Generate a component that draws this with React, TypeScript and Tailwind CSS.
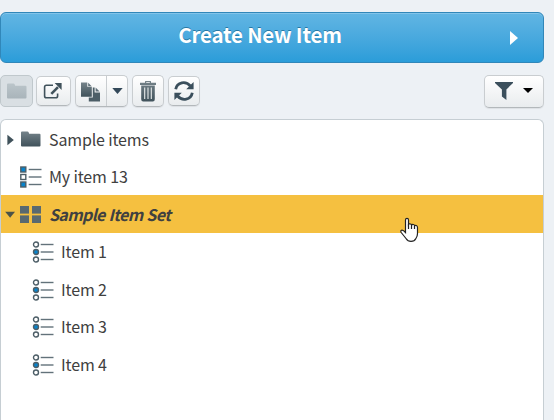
import { useState } from 'react';
import type { ReactNode } from 'react';
import clsx from 'clsx';

type IconKind = 'folder' | 'checklist' | 'set' | 'radio';

type TreeItem = {
  id: string;
  label: string;
  icon: IconKind;
  level: number;
  arrow?: 'right' | 'down';
};

const items: TreeItem[] = [
  { id: 'folder', label: 'Sample items', icon: 'folder', level: 0, arrow: 'right' },
  { id: 'item-13', label: 'My item 13', icon: 'checklist', level: 0 },
  { id: 'set', label: 'Sample Item Set', icon: 'set', level: 0, arrow: 'down' },
  { id: 'item-1', label: 'Item 1', icon: 'radio', level: 1 },
  { id: 'item-2', label: 'Item 2', icon: 'radio', level: 1 },
  { id: 'item-3', label: 'Item 3', icon: 'radio', level: 1 },
  { id: 'item-4', label: 'Item 4', icon: 'radio', level: 1 },
];

function Gradients() {
  return (
    <svg width="0" height="0" className="absolute">
      <defs>
        <linearGradient id="slate" x1="0" y1="0" x2="0" y2="1">
          <stop offset="0" stopColor="#75838a" />
          <stop offset="1" stopColor="#40525b" />
        </linearGradient>
        <linearGradient id="muted" x1="0" y1="0" x2="0" y2="1">
          <stop offset="0" stopColor="#bbc5ca" />
          <stop offset="1" stopColor="#a9b4ba" />
        </linearGradient>
      </defs>
    </svg>
  );
}

function Folder({ fill }: { fill: string }) {
  return (
    <svg width="20" height="16" viewBox="0 0 20 16">
      <path d="M0 1.5Q0 .5 1 .5H6.5Q7.3 .5 7.6 1.3L8.2 2.8H18.5Q19.5 2.8 19.5 3.8V14.5Q19.5 15.5 18.5 15.5H1Q0 15.5 0 14.5Z" fill={fill} />
    </svg>
  );
}

function ItemIcon({ kind }: { kind: IconKind }) {
  if (kind === 'folder') {
    return <Folder fill="url(#slate)" />;
  }

  if (kind === 'set') {
    return (
      <svg width="22" height="18" viewBox="0 0 22 18" fill="#596970">
        <rect x="0" y="0" width="9" height="7.6" />
        <rect x="12" y="0" width="9" height="7.6" />
        <rect x="0" y="9.4" width="9" height="7.6" />
        <rect x="12" y="9.4" width="9" height="7.6" />
      </svg>
    );
  }

  return (
    <svg width="22" height="22" viewBox="0 0 22 22" strokeWidth="1.4" stroke="#4d5e67">
      {[3.5, 11, 18.5].map((y, i) => (
        <g key={y}>
          {kind === 'checklist' ? (
            <rect x="0.8" y={y - 2.5} width="5" height="5" fill={i === 1 ? '#fff' : '#0883cb'} />
          ) : (
            <circle cx="4" cy={y} r="2.5" fill={i === 1 ? '#0883cb' : '#fff'} />
          )}
          <path d={`M8.7 ${y}H21.5`} stroke="#62727a" />
        </g>
      ))}
    </svg>
  );
}

function ToolButton({ children, className }: { children: ReactNode; className?: string }) {
  return (
    <button
      className={clsx(
        'flex items-center justify-center rounded-[5px] border border-[#c9cdd0] border-b-[#b3b8bb] bg-linear-to-b from-white to-[#e9ecee] shadow-[0_1px_1px_#00000012]',
        className
      )}
    >
      {children}
    </button>
  );
}

function Toolbar() {
  return (
    <div className="flex h-11 items-start pt-3">
      <button className="flex h-8 w-[33px] items-center justify-center rounded-[5px] border border-[#c0c8cc] bg-[#d9dfe3]">
        <Folder fill="url(#muted)" />
      </button>

      <ToolButton className="mt-px ml-[3px] h-[30px] w-[35px] pr-px">
        <svg width="20" height="18" viewBox="0 0 20 18" fill="none" stroke="#40525b">
          <path d="M10 3.3H3.4Q1.6 3.3 1.6 5.1V14Q1.6 15.8 3.4 15.8H12.8Q14.6 15.8 14.6 14V11.5" strokeWidth="1.6" />
          <path d="M8.3 11.8L15 5.1" strokeWidth="2.6" />
          <path d="M11.6 1H18.6V8Z" fill="#40525b" stroke="none" />
        </svg>
      </ToolButton>

      <div className="ml-1 flex h-8 w-[53px] rounded-[5px] border border-[#c9cdd0] border-b-[#b3b8bb] bg-linear-to-b from-white to-[#e9ecee] shadow-[0_1px_1px_#00000012]">
        <button className="flex w-[31px] items-center justify-center border-r border-[#c9cdd0] pt-0.5 pr-px">
          <svg width="20" height="20" viewBox="0 0 20 20">
            <path d="M0 .5H6.3V4.8H10.8V14.8H0Z" fill="url(#slate)" />
            <path d="M7.2 .8L10.6 4.2H7.2Z" fill="#61717a" />
            <path d="M7.8 15.6H11.8V5.4H13.6V10.4H19V19.6H7.8Z" fill="#4c5e67" />
            <path d="M14.6 5.6L18.6 9.5H14.6Z" fill="#61717a" />
          </svg>
        </button>
        <button className="flex flex-1 items-center justify-center">
          <svg width="11" height="6" viewBox="0 0 11 6">
            <path d="M.3 0H10.7L5.5 6Z" fill="#34495a" />
          </svg>
        </button>
      </div>

      <ToolButton className="ml-1 h-8 w-8 pr-px">
        <svg width="16" height="21" viewBox="0 0 16 21">
          <path d="M0 1.8H5V.5Q5 0 5.5 0H10.5Q11 0 11 .5V1.8H16V4H0ZM6.2 1V1.8H9.8V1ZM1.2 4.6H14.8V18.3Q14.8 20.5 12.8 20.5H3.2Q1.2 20.5 1.2 18.3Z" fill="url(#slate)" fillRule="evenodd" />
          <path d="M4.7 6.5V18M8 6.5V18M11.3 6.5V18" stroke="#e8ebec" strokeWidth="1.1" />
        </svg>
      </ToolButton>

      <ToolButton className="mt-px ml-1 h-[30px] w-8">
        <svg width="20" height="20" viewBox="0 0 20 20" fill="none" stroke="#3b4f5c" strokeWidth="2.8">
          <path d="M1.7 8.3C3 1 11.8-.4 16.4 5" />
          <path d="M18.3 11.7C17 19 8.2 20.4 3.6 15" />
          <path d="M19.6 1V8.3H12.2ZM.4 19V11.7H7.8Z" fill="#3b4f5c" stroke="none" />
        </svg>
      </ToolButton>

      <ToolButton className="ml-auto h-[33px] w-[60px] gap-[10px] pb-0.5">
        <svg width="18" height="18" viewBox="0 0 18 18">
          <path d="M0 0H18V1L11.4 7.4V18L6.9 14.5V7.4L0 1Z" fill="#3b4f5c" />
        </svg>
        <svg width="10" height="5" viewBox="0 0 10 5">
          <path d="M0 0H10L5 5Z" fill="#000" />
        </svg>
      </ToolButton>
    </div>
  );
}

export default function App() {
  const [selected, setSelected] = useState('set');

  return (
    <div className="relative flex h-[420px] w-[554px] flex-col overflow-hidden bg-[#edf1f5] pt-3 pr-[10px] font-['Noto_Sans_CJK_SC',sans-serif] text-[#404040]">
      <Gradients />

      <button className="flex h-[51px] w-full shrink-0 items-center rounded-md border border-[#3187b9] bg-linear-to-b from-[#61b5e3] to-[#2a9dd9] pr-[25px] text-white shadow-[inset_0_1px_0_#83c4e9]">
        <span className="flex-1 pb-[7px] pl-[9px] text-center text-[20.5px] leading-6 font-bold tracking-[-0.2px] [text-shadow:0_-1px_0_#2878a5]">
          Create New Item
        </span>
        <svg width="8" height="14" viewBox="0 0 8 14">
          <path d="M0 0L8 7L0 14Z" fill="#fff" />
        </svg>
      </button>

      <Toolbar />

      <div className="mt-3 flex-1 rounded-t-md border border-b-0 border-[#c6ced3] bg-white">
        {items.map((item) => (
          <div
            key={item.id}
            onClick={() => setSelected(item.id)}
            className={clsx(
              'flex h-[37.5px] items-center pt-0.5',
              item.level === 0 ? 'pl-1' : 'pl-4',
              selected === item.id
                ? 'bg-[#f5c040] font-bold tracking-[-0.62px] italic [word-spacing:0.8px]'
                : 'tracking-[-0.15px]'
            )}
          >
            <span className="flex w-[15px] shrink-0 items-center">
              {item.arrow === 'right' && (
                <svg width="9" height="12" viewBox="0 0 9 12">
                  <path d="M2.4 .8L8.8 6L2.4 11.2Z" fill="#40525b" />
                </svg>
              )}
              {item.arrow === 'down' && (
                <svg width="11" height="7" viewBox="0 0 11 7">
                  <path d="M.2 .8H10L5.1 6.8Z" fill="#4c5348" />
                </svg>
              )}
            </span>
            <span className={clsx('flex w-[22px] shrink-0', item.icon === 'folder' && 'pb-px pl-px')}>
              <ItemIcon kind={item.icon} />
            </span>
            <span className="pb-0.5 pl-[7px] text-base leading-6">{item.label}</span>
          </div>
        ))}
      </div>

      <svg className="absolute top-[217px] left-[400px]" width="19" height="26" viewBox="0 0 19 26">
        <path
          d="M5.5 15.5V3Q5.5 1.4 7 1.4Q8.5 1.4 8.5 3V7.4Q9 6.6 10.1 6.8Q11.4 7 11.6 8Q12.2 7.3 13.3 7.5Q14.4 7.7 14.6 8.7Q15.3 8.2 16.3 8.5Q17.5 9 17.5 10.5V16.5Q17.5 19.5 15.9 21.5Q14.5 24.4 11 24.4Q7.8 24.4 6 21.5L1.2 15.5Q.3 14 1.5 13.3Q3 12.6 5.5 15.5Z"
          fill="#fff"
          stroke="#222"
          strokeWidth="1.2"
        />
        <path d="M8.5 7V12M11.5 8V12M14.5 9V12" stroke="#222" strokeWidth="1.2" />
      </svg>
    </div>
  );
}
